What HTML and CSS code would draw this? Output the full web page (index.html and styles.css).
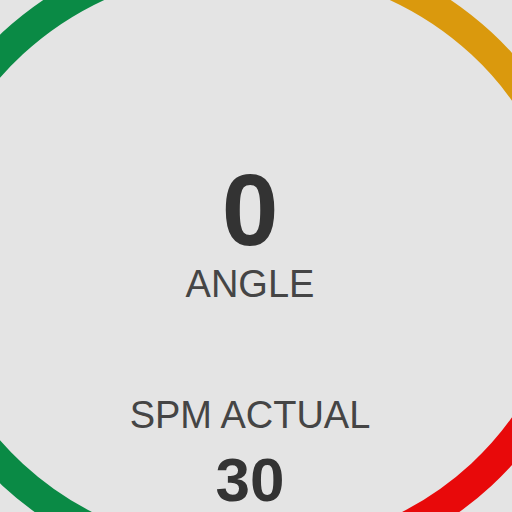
FILE: index.html
```html
<!DOCTYPE html>
<html>
<head>
<meta charset="utf-8">
<link rel="stylesheet" href="styles.css">
</head>
<body>
<div class="gauge">
  <svg class="ring" width="512" height="512" viewBox="0 0 512 512">
    <defs>
      <clipPath id="cl"><rect x="0" y="0" width="246" height="512"/></clipPath>
      <clipPath id="ctr"><rect x="246" y="0" width="266" height="259"/></clipPath>
      <clipPath id="cbr"><rect x="246" y="259" width="266" height="253"/></clipPath>
    </defs>
    <ellipse cx="246" cy="259" rx="330" ry="305" fill="none" stroke="#0a8a45" stroke-width="30" clip-path="url(#cl)"/>
    <ellipse cx="248" cy="259" rx="330" ry="305" fill="none" stroke="#da990d" stroke-width="30" clip-path="url(#ctr)"/>
    <ellipse cx="248" cy="259" rx="330" ry="305" fill="none" stroke="#e8090a" stroke-width="30" clip-path="url(#cbr)"/>
  </svg>
  <div class="readout">
    <div class="value big">0</div>
    <div class="label angle">ANGLE</div>
    <div class="label spm">SPM ACTUAL</div>
    <div class="value small">30</div>
  </div>
</div>
</body>
</html>
```
FILE: styles.css
```css
html, body {
  margin: 0;
  padding: 0;
  background: #e4e4e4;
}
.gauge {
  position: relative;
  width: 512px;
  height: 512px;
  overflow: hidden;
  font-family: "Liberation Sans", Arial, sans-serif;
}
.ring {
  position: absolute;
  left: 0;
  top: 0;
}
.readout {
  position: relative;
  display: flex;
  flex-direction: column;
  align-items: center;
  padding-top: 159px;
  padding-right: 12px;
}
.value {
  font-weight: bold;
  color: #333333;
  line-height: 1;
}
.big {
  font-size: 102px;
}
.small {
  font-size: 62px;
  line-height: 0.85;
  margin-top: 20px;
}
.label {
  color: #454545;
  font-size: 38px;
  line-height: 1;
}
.angle {
  margin-top: 4px;
}
.spm {
  margin-top: 93px;
}
```
